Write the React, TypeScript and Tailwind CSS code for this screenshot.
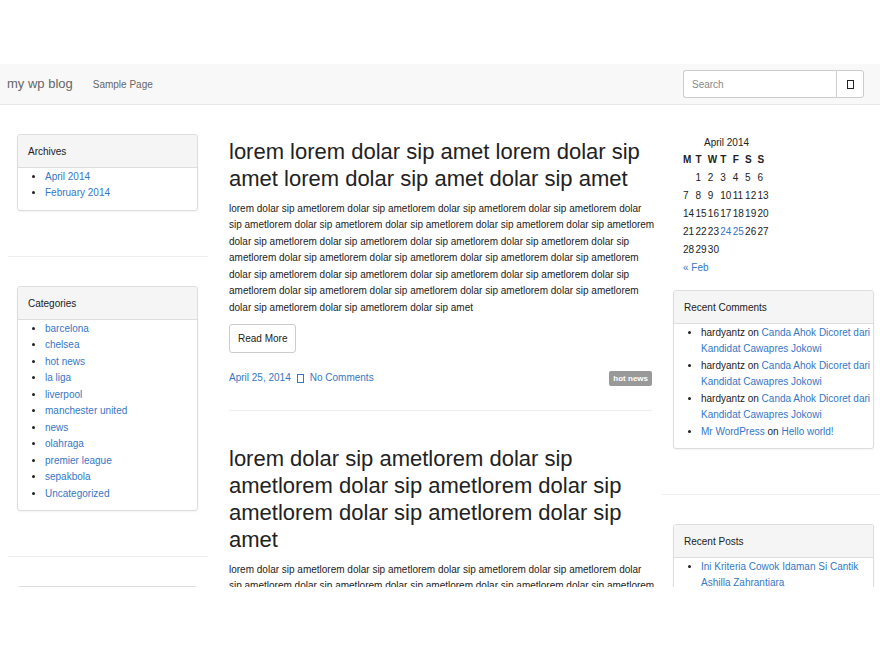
import type { ReactNode } from "react";

const repeat = (text: string, times: number) => Array(times).fill(text).join("");

const openingLine = repeat("lorem dolar sip amet", 4) + "lorem dolar";
const secondLine = "sip " + repeat("ametlorem dolar sip ", 4) + "ametlorem";
const shortLine = "dolar sip " + repeat("ametlorem dolar sip ", 4);
const longLine = repeat("ametlorem dolar sip ", 4) + "ametlorem";
const closingLine = "dolar sip ametlorem dolar sip ametlorem dolar sip amet";
const excerpt = [openingLine, secondLine, shortLine, longLine, shortLine, longLine, closingLine];

const categories = [
  "barcelona",
  "chelsea",
  "hot news",
  "la liga",
  "liverpool",
  "manchester united",
  "news",
  "olahraga",
  "premier league",
  "sepakbola",
  "Uncategorized",
];

const weekdays = ["M", "T", "W", "T", "F", "S", "S"];
const weeks: (number | null)[][] = [
  [null, 1, 2, 3, 4, 5, 6],
  [7, 8, 9, 10, 11, 12, 13],
  [14, 15, 16, 17, 18, 19, 20],
  [21, 22, 23, 24, 25, 26, 27],
  [28, 29, 30, null, null, null, null],
];
const daysWithPosts = [24, 25];

function Link({ children }: { children: ReactNode }) {
  return (
    <a href="#" className="text-[#3577c4] hover:underline">
      {children}
    </a>
  );
}

function MissingGlyph() {
  return <span aria-hidden="true" className="inline-block h-[9px] w-[7px] border border-current" />;
}

function Panel({ title, children }: { title: string; children: ReactNode }) {
  return (
    <section className="rounded-[3px] border border-[#dddddd] bg-white pb-2 shadow-xs">
      <h3 className="rounded-t-[2px] border-b border-[#dddddd] bg-[#f5f5f5] px-[10px] pt-[9px] pb-[7px] leading-4">
        {title}
      </h3>
      {children}
    </section>
  );
}

function Rule() {
  return <hr className="mt-[45px] mb-[29px] border-[#eeeeee]" />;
}

function LinkList({ items }: { items: string[] }) {
  return (
    <ul className="list-disc pt-px pl-[27px] leading-4">
      {items.map((item) => (
        <li key={item} className="even:mb-px">
          <Link>{item}</Link>
        </li>
      ))}
    </ul>
  );
}

function Calendar() {
  return (
    <table className="w-[87px] table-fixed text-left leading-[18px]">
      <caption className="leading-[17px]">April 2014</caption>
      <thead>
        <tr>
          {weekdays.map((day, i) => (
            <th key={i} scope="col" className="p-0 font-bold">
              {day}
            </th>
          ))}
        </tr>
      </thead>
      <tbody>
        {weeks.map((week, i) => (
          <tr key={i}>
            {week.map((day, j) => (
              <td key={j} className="p-0">
                {day !== null && daysWithPosts.includes(day) ? <Link>{day}</Link> : day}
              </td>
            ))}
          </tr>
        ))}
      </tbody>
      <tfoot>
        <tr>
          <td colSpan={3} className="p-0">
            <Link>« Feb</Link>
          </td>
          <td colSpan={4} />
        </tr>
      </tfoot>
    </table>
  );
}

function PostBody({ title, lines }: { title: string; lines: string[] }) {
  return (
    <>
      <h2 className="text-[22px] leading-[27px] font-medium">{title}</h2>
      <p className="mt-[9px] leading-4 whitespace-nowrap">
        {lines.map((line, i) => (
          <span key={i} className="block even:mb-px">
            {line}
          </span>
        ))}
      </p>
    </>
  );
}

export default function App() {
  return (
    <div className="h-screen bg-white pt-16 pb-[73px] font-['Liberation_Sans',Arial,sans-serif] text-[10px] text-[#222222]">
      <div className="h-full overflow-hidden">
        <nav className="flex h-[41px] items-center border-b border-[#e7e7e7] bg-[#f8f8f8] pr-4 pl-[7px] text-[#666666]">
          <a href="#" className="text-[13px]">
            my wp blog
          </a>
          <a href="#" className="ml-5">
            Sample Page
          </a>
          <form role="search" className="ml-auto flex h-7" onSubmit={(event) => event.preventDefault()}>
            <input
              type="text"
              aria-label="Search"
              placeholder="Search"
              className="w-[153px] rounded-l-[3px] border border-r-0 border-[#cccccc] bg-white px-2 outline-none placeholder:text-[#888888]"
            />
            <button
              type="submit"
              aria-label="Submit search"
              className="flex w-7 items-center justify-center rounded-r-[3px] border border-[#cccccc] bg-white text-[#222222]"
            >
              <MissingGlyph />
            </button>
          </form>
        </nav>

        <div className="grid grid-cols-[200px_minmax(0,1fr)_218px] pt-[29px] pl-2">
          <aside>
            <div className="pr-[10px] pl-[9px]">
              <Panel title="Archives">
                <LinkList items={["April 2014", "February 2014"]} />
              </Panel>
            </div>
            <Rule />
            <div className="pr-[10px] pl-[9px]">
              <Panel title="Categories">
                <LinkList items={categories} />
              </Panel>
            </div>
            <Rule />
            <div className="pr-[10px] pl-[9px]">
              <div className="h-8 rounded-[3px] border border-[#dddddd] bg-[#f5f5f5]" />
            </div>
          </aside>

          <main className="pt-1 pr-[10px] pl-[21px]">
            <article>
              <PostBody
                title="lorem lorem dolar sip amet lorem dolar sip amet lorem dolar sip amet dolar sip amet"
                lines={excerpt}
              />
              <button
                type="button"
                className="mt-2 h-[29px] rounded-[3px] border border-[#cccccc] bg-white px-2 text-[#222222]"
              >
                Read More
              </button>
              <footer className="mt-[17px] flex items-center justify-between leading-4">
                <div className="flex items-center gap-[6px] text-[#3577c4]">
                  <Link>April 25, 2014</Link>
                  <MissingGlyph />
                  <Link>No Comments</Link>
                </div>
                <a href="#" className="rounded-[2px] bg-[#999999] px-1 text-[8px] leading-[15px] font-bold text-white">
                  hot news
                </a>
              </footer>
              <hr className="mt-6 mb-[34px] border-[#eeeeee]" />
            </article>
            <article>
              <PostBody title={repeat("lorem dolar sip amet", 6)} lines={excerpt.slice(0, 2)} />
            </article>
          </main>

          <aside>
            <div className="pl-[21px]">
              <Calendar />
            </div>
            <div className="mt-[13px] pr-[6px] pl-[11px]">
              <Panel title="Recent Comments">
                <ul className="list-disc pt-px pl-[27px] leading-4">
                  {[1, 2, 3].map((n) => (
                    <li key={n} className="mb-px">
                      hardyantz on <Link>Canda Ahok Dicoret dari Kandidat Cawapres Jokowi</Link>
                    </li>
                  ))}
                  <li>
                    <Link>Mr WordPress</Link> on <Link>Hello world!</Link>
                  </li>
                </ul>
              </Panel>
            </div>
            <Rule />
            <div className="pr-[6px] pl-[11px]">
              <Panel title="Recent Posts">
                <ul className="list-disc pt-px pl-[27px] leading-4">
                  <li>
                    <Link>Ini Kriteria Cowok Idaman Si Cantik Ashilla Zahrantiara</Link>
                  </li>
                </ul>
              </Panel>
            </div>
          </aside>
        </div>
      </div>
    </div>
  );
}
